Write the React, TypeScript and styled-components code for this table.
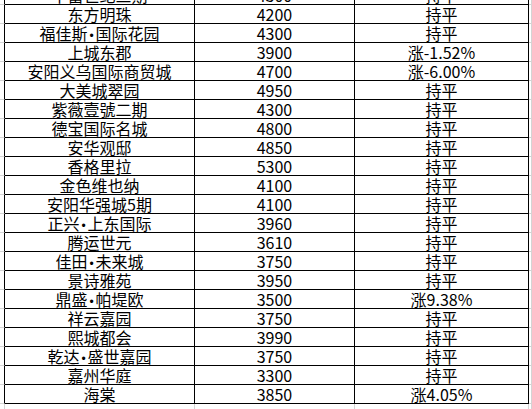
import styled, { createGlobalStyle } from "styled-components";

const GlobalStyle = createGlobalStyle`
  html, body {
    margin: 0;
    padding: 0;
    background: #ffffff;
    overflow: hidden;
  }
  body {
    font-family: "Noto Sans CJK SC", "Noto Sans", sans-serif;
  }
`;

const rows: [string, string, string][] = [
  ["丰富世纪三期", "4300", "持平"],
  ["东方明珠", "4200", "持平"],
  ["福佳斯•国际花园", "4300", "持平"],
  ["上城东郡", "3900", "涨-1.52%"],
  ["安阳义乌国际商贸城", "4700", "涨-6.00%"],
  ["大美城翠园", "4950", "持平"],
  ["紫薇壹號二期", "4300", "持平"],
  ["德宝国际名城", "4800", "持平"],
  ["安华观邸", "4850", "持平"],
  ["香格里拉", "5300", "持平"],
  ["金色维也纳", "4100", "持平"],
  ["安阳华强城5期", "4100", "持平"],
  ["正兴•上东国际", "3960", "持平"],
  ["腾运世元", "3610", "持平"],
  ["佳田•未来城", "3750", "持平"],
  ["景诗雅苑", "3950", "持平"],
  ["鼎盛•帕堤欧", "3500", "涨9.38%"],
  ["祥云嘉园", "3750", "持平"],
  ["熙城都会", "3990", "持平"],
  ["乾达•盛世嘉园", "3750", "持平"],
  ["嘉州华庭", "3300", "持平"],
  ["海棠", "3850", "涨4.05%"],
];

const GRID = "#d4d4d4";

// split the name on the bullet so the dot renders half-width like the sheet
const renderName = (name: string) => {
  const parts = name.split("•");
  return parts.map((p, i) => (
    <span key={i}>
      {i > 0 && <Dot>•</Dot>}
      {p}
    </span>
  ));
};

const App = () => {
  return (
    <>
      <GlobalStyle />
      <Sheet>
        {rows.map(([name, price, change], i) => (
          <Row key={i}>
            <Cell $right="#000" $bottom={GRID} />
            <Cell $right="#000" $bottom="#000">{renderName(name)}</Cell>
            <Cell $right="#000" $bottom="#000">{price}</Cell>
            <Cell $right="#000" $bottom="#000">{change}</Cell>
            <Cell $right={GRID} $bottom={GRID} />
          </Row>
        ))}
        <Row>
          <Cell $right={GRID} $bottom={GRID} />
          <Cell $right={GRID} $bottom={GRID} />
          <Cell $right={GRID} $bottom={GRID} />
          <Cell $right={GRID} $bottom={GRID} />
          <Cell $right={GRID} $bottom={GRID} />
        </Row>
      </Sheet>
    </>
  );
};

export default App;

const Sheet = styled.div`
  display: flex;
  flex-direction: column;
  margin-top: -14px;
  width: 100%;
`;

const Row = styled.div`
  display: grid;
  grid-template-columns: 5px 190px 160px 174px 1fr;
  height: 19px;
`;

const Cell = styled.div<{ $right: string; $bottom: string }>`
  box-sizing: border-box;
  height: 19px;
  border-right: 1px solid ${({ $right }) => $right};
  border-bottom: 1px solid ${({ $bottom }) => $bottom};
  font-size: 16px;
  line-height: 19px;
  color: #000;
  text-align: center;
  white-space: nowrap;
  overflow: hidden;
`;

const Dot = styled.span`
  display: inline-block;
  width: 8px;
  font-family: "Liberation Sans", sans-serif;
  font-size: 12px;
  text-align: center;
`;
